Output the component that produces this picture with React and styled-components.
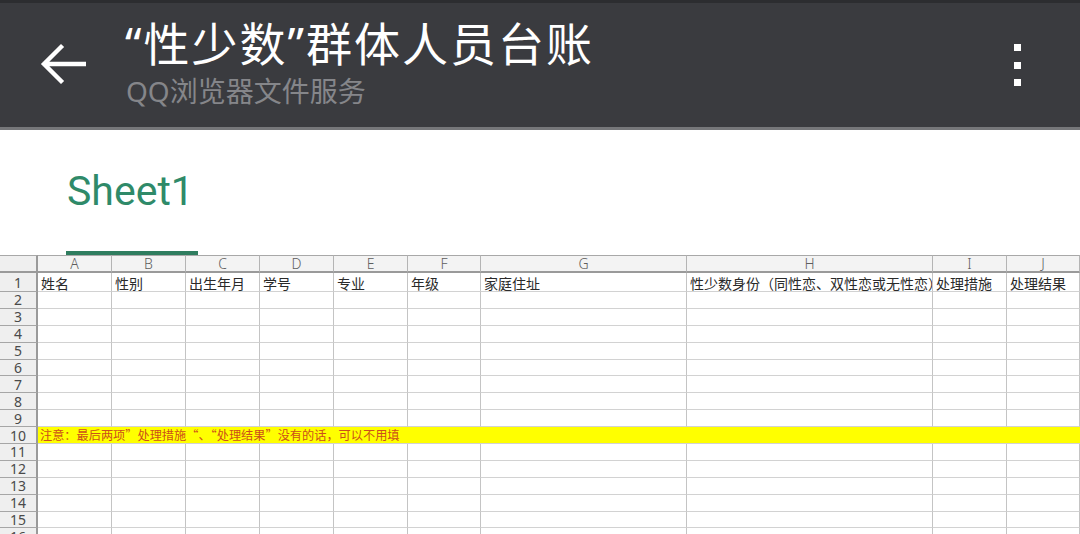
import React from 'react'
import styled, { createGlobalStyle } from 'styled-components'

const GlobalStyle = createGlobalStyle`
  html, body {
    margin: 0;
    padding: 0;
    background: #ffffff;
    overflow: hidden;
  }
  body {
    font-family: "Noto Sans", "Noto Sans CJK SC", sans-serif;
  }
`

const Page = styled.div`
  width: 1080px;
  height: 534px;
  display: flex;
  flex-direction: column;
  overflow: hidden;
  background: #fff;
`

const TopBar = styled.header`
  height: 124px;
  flex: none;
  display: flex;
  align-items: center;
  background: #3a3b3f;
  border-top: 3px solid #2c2d30;
  border-bottom: 3px solid #76777a;
`

const BackButton = styled.div`
  width: 125px;
  height: 100%;
  display: flex;
  align-items: center;
  padding-left: 40px;
  box-sizing: border-box;
  svg {
    margin-top: -2px;
  }
`

const Titles = styled.div`
  flex: 1;
  display: flex;
  flex-direction: column;
  margin-top: -4px;
`

const Title = styled.div`
  font-family: "Noto Sans", "Noto Sans CJK SC", sans-serif;
  font-size: 46px;
  line-height: 50px;
  letter-spacing: 2px;
  color: #ffffff;
  white-space: nowrap;
`

const Subtitle = styled.div`
  font-family: "Noto Sans", "Noto Sans CJK SC", sans-serif;
  font-size: 28px;
  line-height: 34px;
  color: #85868a;
  margin: 6px 0 0 1px;
`

const Kebab = styled.div`
  width: 66px;
  display: flex;
  flex-direction: column;
  align-items: flex-start;
  gap: 10.5px;
  span {
    width: 7px;
    height: 7px;
    background: #ffffff;
  }
`

const TabStrip = styled.div`
  height: 125px;
  flex: none;
  display: flex;
  align-items: flex-end;
  padding-left: 66px;
`

const Tab = styled.div`
  width: 132px;
  height: 100%;
  box-sizing: border-box;
  border-bottom: 4px solid #2f7d5f;
  font-family: Roboto, "Noto Sans", sans-serif;
  font-size: 41px;
  color: #2f8a69;
  padding: 34px 0 0 1px;
  line-height: 54px;
`

const SheetWrap = styled.div`
  flex: 1;
  overflow: hidden;
`

const Sheet = styled.table`
  table-layout: fixed;
  border-collapse: separate;
  border-spacing: 0;
  width: 1140px;
  font-family: "Noto Sans CJK SC", sans-serif;
`

const ColHead = styled.th`
  height: 15px;
  padding: 0;
  background: #f3f3f3;
  border-top: 1px solid #a8a8a8;
  border-right: 1px solid #b4b4b4;
  border-bottom: 2px solid #9a9a9a;
  font-family: "Noto Sans", sans-serif;
  font-weight: 300;
  font-size: 14px;
  line-height: 15px;
  color: #5e5e5e;
  text-align: center;
`

const Corner = styled(ColHead)`
  background: #efefef;
  border-right: 2px solid #9a9a9a;
`

const RowHead = styled.td`
  height: ${({ $tall }) => ($tall ? '18px' : '15.9px')};
  padding: 0;
  background: #efefef;
  border-right: 2px solid #9a9a9a;
  border-bottom: 1px solid #a6a6a6;
  font-family: "Noto Sans", sans-serif;
  font-size: 14px;
  line-height: 15px;
  color: #4a4a4a;
  text-align: center;
  vertical-align: middle;
`

const Cell = styled.td`
  padding: 0 0 0 3px;
  border-right: 1px solid #c4c4c4;
  border-bottom: 1px solid #d2d2d2;
  font-size: 14px;
  line-height: 15px;
  color: #2a2a2a;
  white-space: nowrap;
  overflow: hidden;
  vertical-align: bottom;
`

const NoteCell = styled.td`
  padding: 0 0 0 2px;
  background: #ffff00;
  border-bottom: 1px solid #d2d2d2;
  font-family: "Noto Sans CJK SC", sans-serif;
  font-size: 12.2px;
  line-height: 14px;
  color: #cc4f1a;
  white-space: nowrap;
  vertical-align: middle;
`

const widths = [38, 74, 74, 74, 74, 74, 73, 206, 246, 74, 73, 60]
const letters = ['A', 'B', 'C', 'D', 'E', 'F', 'G', 'H', 'I', 'J', '']
const headers = ['姓名', '性别', '出生年月', '学号', '专业', '年级', '家庭住址', '性少数身份（同性恋、双性恋或无性恋）', '处理措施', '处理结果', '']

const BackArrow = () => (
  <svg width="46" height="42" viewBox="0 0 46 42">
    <path d="M44 21H5M21 4L4 21l17 17" fill="none" stroke="#fff" strokeWidth="4.4" strokeLinecap="square" />
  </svg>
)

const App = () => {
  const rows = Array.from({ length: 16 }, (_, i) => i + 1)
  return (
    <Page>
      <GlobalStyle />
      <TopBar>
        <BackButton>
          <BackArrow />
        </BackButton>
        <Titles>
          <Title>“性少数”群体人员台账</Title>
          <Subtitle>QQ浏览器文件服务</Subtitle>
        </Titles>
        <Kebab>
          <span />
          <span />
          <span />
        </Kebab>
      </TopBar>
      <TabStrip>
        <Tab>Sheet1</Tab>
      </TabStrip>
      <SheetWrap>
        <Sheet>
          <colgroup>
            {widths.map((w, i) => (
              <col key={i} style={{ width: w }} />
            ))}
          </colgroup>
          <thead>
            <tr>
              <Corner />
              {letters.map((l, i) => (
                <ColHead key={i}>{l}</ColHead>
              ))}
            </tr>
          </thead>
          <tbody>
            {rows.map((r) => (
              <tr key={r}>
                <RowHead $tall={r === 1}>{r}</RowHead>
                {r === 10 ? (
                  <NoteCell colSpan={11}>注意：最后两项”处理措施“、“处理结果”没有的话，可以不用填</NoteCell>
                ) : (
                  headers.map((h, i) => <Cell key={i}>{r === 1 ? h : ''}</Cell>)
                )}
              </tr>
            ))}
          </tbody>
        </Sheet>
      </SheetWrap>
    </Page>
  )
}

export default App
